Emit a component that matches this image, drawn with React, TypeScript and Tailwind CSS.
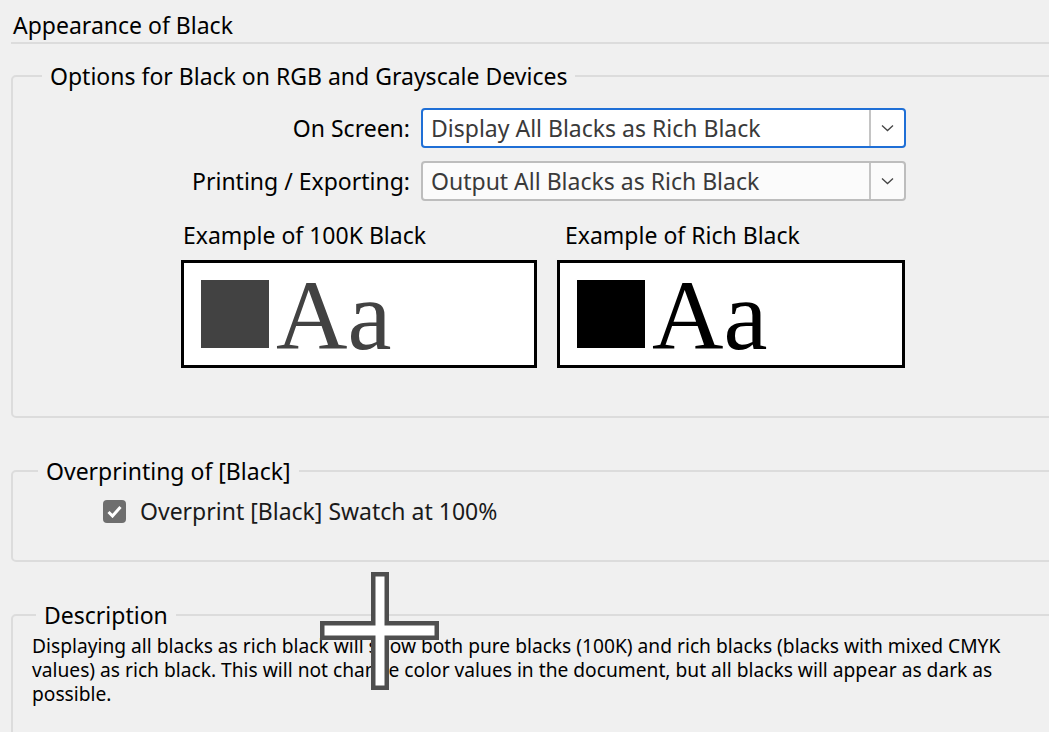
import React from "react";

const font = { fontFamily: '"Noto Sans", "Open Sans", sans-serif' };

function Chevron() {
  return (
    <svg width="13" height="8" viewBox="0 0 13 8" fill="none">
      <path d="M1 1.5 L6.5 6.5 L12 1.5" stroke="#444" strokeWidth="1.3" />
    </svg>
  );
}

function Select({ value, focused }: { value: string; focused?: boolean }) {
  return (
    <div
      className={`flex h-[40px] w-[485px] items-stretch rounded-[4px] border-2 ${
        focused ? "border-[#1f6fd6] bg-white" : "border-[#bdbdbd] bg-[#fbfbfb]"
      }`}
    >
      <div className="flex flex-1 items-center pl-[8px] text-[23px] text-[#3a3a3a]">{value}</div>
      <div className="flex w-[35px] items-center justify-center border-l-2 border-[#c4c4c4]">
        <Chevron />
      </div>
    </div>
  );
}

function Example({ label, color, width, pad }: { label: string; color: string; width: string; pad: string }) {
  return (
    <div className="flex flex-col">
      <div className={`mb-[12px] ${pad} text-[23px] leading-[26px] text-black`}>{label}</div>
      <div className={`flex h-[108px] ${width} items-center border-[3px] border-black bg-white pl-[17px]`}>
        <div className={`h-[68px] w-[68px] ${color === "gray" ? "bg-[#424242]" : "bg-black"}`} />
        <span
          className={`ml-[7px] mt-[2px] text-[99px] leading-none ${color === "gray" ? "text-[#424242]" : "text-black"}`}
          style={{ fontFamily: '"Liberation Serif", serif' }}
        >
          Aa
        </span>
      </div>
    </div>
  );
}

export default function App() {
  return (
    <div className="relative h-[732px] w-[1049px] overflow-hidden bg-[#f0f0f0] text-black" style={font}>
      <div className="ml-[11px] mr-[-20px] border-b-2 border-[#dcdcdc] pl-[2px] pt-[8px] text-[23px] leading-[34px]">
        Appearance of Black
      </div>

      <fieldset className="ml-[11px] mr-[-20px] mt-[16px] rounded-[5px] border-2 border-[#dcdcdc] pb-[48px]">
        <legend className="ml-[29px] px-[8px] text-[23px] leading-[32px]">
          Options for Black on RGB and Grayscale Devices
        </legend>
        <div className="mt-[16px] flex flex-col gap-[13px]">
          <div className="flex items-center">
            <div className="w-[397px] text-right text-[23px]">On Screen:</div>
            <div className="ml-[11px]">
              <Select value="Display All Blacks as Rich Black" focused />
            </div>
          </div>
          <div className="flex items-center">
            <div className="w-[397px] text-right text-[23px]">Printing / Exporting:</div>
            <div className="ml-[11px]">
              <Select value="Output All Blacks as Rich Black" />
            </div>
          </div>
        </div>
        <div className="ml-[168px] mt-[21px] flex gap-[20px]">
          <Example label="Example of 100K Black" color="gray" width="w-[356px]" pad="pl-[2px]" />
          <Example label="Example of Rich Black" color="black" width="w-[348px]" pad="pl-[8px]" />
        </div>
      </fieldset>

      <fieldset className="ml-[11px] mr-[-20px] mt-[37px] h-[107px] rounded-[5px] border-2 border-[#dcdcdc]">
        <legend className="ml-[25px] px-[8px] text-[23px] leading-[32px]">Overprinting of [Black]</legend>
        <div className="ml-[90px] mt-[7px] flex items-center gap-[14px]">
          <div className="flex h-[23px] w-[23px] items-center justify-center rounded-[4px] bg-[#6e6e6e]">
            <svg width="15" height="13" viewBox="0 0 15 13" fill="none">
              <path d="M1.5 7 L5.5 11 L13.5 2" stroke="white" strokeWidth="3" />
            </svg>
          </div>
          <span className="text-[23px] text-[#1a1a1a]">Overprint [Black] Swatch at 100%</span>
        </div>
      </fieldset>

      <fieldset className="ml-[11px] mr-[-20px] mt-[37px] h-[140px] rounded-[5px] border-2 border-[#dcdcdc]">
        <legend className="ml-[23px] px-[8px] text-[23px] leading-[32px]">Description</legend>
        <p className="ml-[19px] mr-[30px] mt-[3px] text-[19.2px] leading-[24px]">
          Displaying all blacks as rich black will show both pure blacks (100K) and rich blacks (blacks with mixed CMYK
          values) as rich black. This will not change color values in the document, but all blacks will appear as dark as
          possible.
        </p>
      </fieldset>

      <svg className="absolute left-[320px] top-[572px]" width="120" height="120" viewBox="0 0 120 120">
        <path d="M51 0 H69 V49 H119 V68 H69 V118 H51 V68 H0 V49 H51 Z" fill="#4f4f4f" />
        <path d="M55.5 4.5 H64.5 V53.5 H114.5 V63.5 H64.5 V113.5 H55.5 V63.5 H4.5 V53.5 H55.5 Z" fill="white" />
      </svg>
    </div>
  );
}
